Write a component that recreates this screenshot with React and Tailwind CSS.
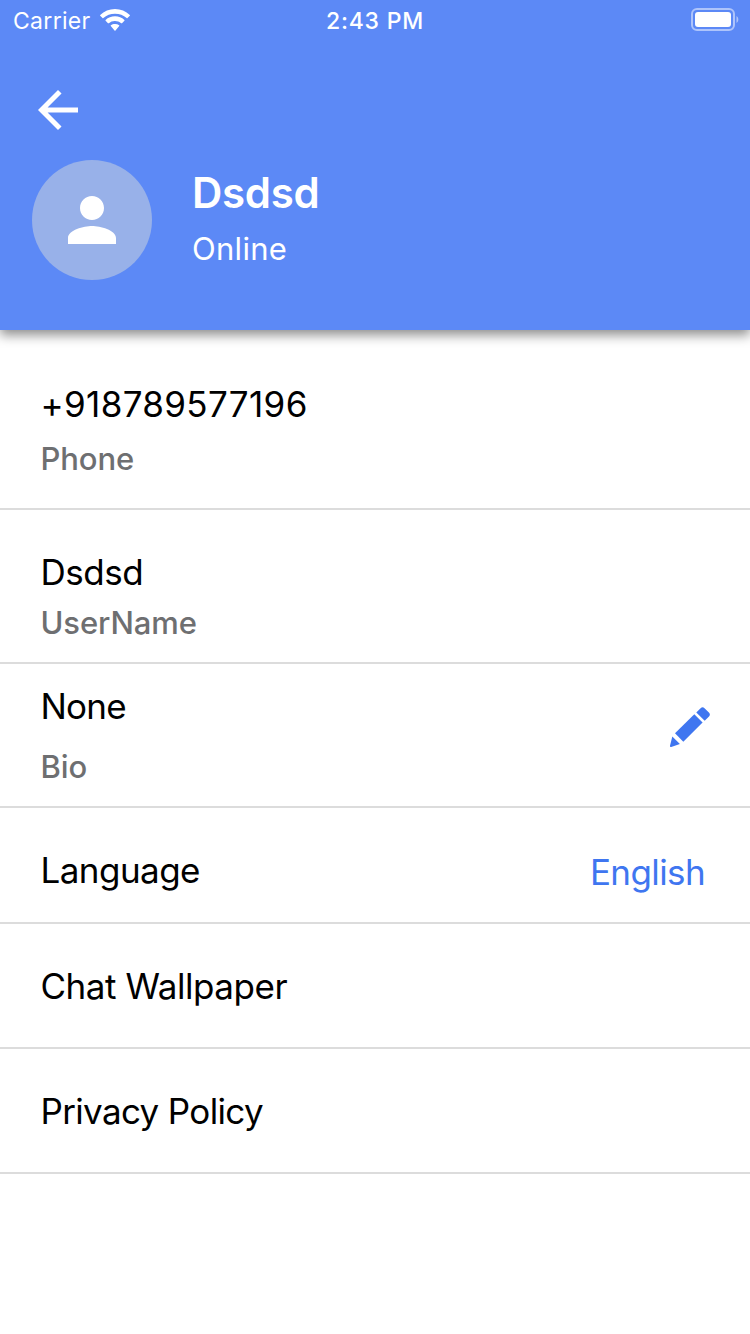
import React from "react";
import { MdArrowBack, MdPerson } from "react-icons/md";

const rows = [
  { value: "+918789577196", label: "Phone", row: "h-[180px] pt-[54px]", gap: "mt-[15px]", tracking: "tracking-[0.35px]" },
  { value: "Dsdsd", label: "UserName", row: "h-[154px] pt-[42px]", gap: "mt-[11px]", tracking: "tracking-[-0.5px]" },
  { value: "None", label: "Bio", row: "h-[144px] pt-[22px]", gap: "mt-[21px]", tracking: "tracking-[-0.8px]", editable: true },
  { value: "Language", row: "h-[116px] pt-[42px]", tracking: "tracking-[-0.55px]", action: "English" },
  { value: "Chat Wallpaper", row: "h-[125px] pt-[42px]", tracking: "tracking-[-0.45px]" },
  { value: "Privacy Policy", row: "h-[125px] pt-[42px]", tracking: "tracking-[-0.65px]" },
];

export default function App() {
  return (
    <div className="w-[750px] h-[1334px] bg-white overflow-hidden font-['Inter',sans-serif]">
      <Header />
      {rows.map((item) => (
        <SettingRow key={item.value} item={item} />
      ))}
    </div>
  );
}

function Header() {
  return (
    <div className="h-[330px] bg-[#5c89f6] text-white relative shadow-[0_5px_11px_rgba(0,0,0,0.45)]">
      <StatusBar />
      <div className="pt-10 pl-7">
        <MdArrowBack className="size-[60px]" />
      </div>
      <div className="flex pl-8 pt-5">
        <div className="size-[120px] rounded-full bg-[#98b1e9] flex items-center justify-center">
          <MdPerson className="size-[72px]" />
        </div>
        <div className="pl-10 pt-2">
          <div className="text-[42px] leading-[50px] font-semibold tracking-[-0.3px]">Dsdsd</div>
          <div className="mt-[11px] text-[31px] leading-10 tracking-[0.3px]">Online</div>
        </div>
      </div>
    </div>
  );
}

function StatusBar() {
  return (
    <div className="h-10 grid grid-cols-3 items-start px-[13px] text-[23px] leading-[42px]">
      <div className="flex items-start gap-[9px]">
        <span className="tracking-[0.3px]">Carrier</span>
        <WifiIcon />
      </div>
      <div className="text-center font-medium tracking-[0.8px]">2:43 PM</div>
      <div className="flex justify-end">
        <BatteryIcon />
      </div>
    </div>
  );
}

function SettingRow({ item }) {
  return (
    <div className={`${item.row} flex justify-between pl-[40.5px] pr-10 border-b-2 border-[#dcdcdc]`}>
      <div>
        <div className={`${item.tracking} text-[35px] leading-10 text-black`}>{item.value}</div>
        {item.label && (
          <div className={`${item.gap} text-[31px] leading-10 font-medium tracking-[-0.1px] text-[#6e6f71]`}>{item.label}</div>
        )}
      </div>
      {item.editable && <PencilIcon />}
      {item.action && (
        <div className="pt-[2px] pr-[5px] text-[35px] leading-10 tracking-[-0.6px] text-[#3f76f0]">{item.action}</div>
      )}
    </div>
  );
}

function WifiIcon() {
  return (
    <svg className="mt-[9px] w-[30px] h-[22px]" viewBox="0 0 30 22" fill="currentColor">
      <path d="M15 0C9.300 0 4.100 2.200.2 5.900c-.25.25-.25.600 0 .85l2.300 2.300c.25.25.600.25.850 0C6.500 6.200 10.500 4.700 15 4.700s8.500 1.500 11.650 4.350c.25.25.600.25.850 0l2.300-2.300c.25-.25.25-.600 0-.85C25.900 2.200 20.700 0 15 0z" />
      <path d="M15 7.300c-3.600 0-6.900 1.350-9.400 3.600-.25.25-.25.600 0 .85l2.400 2.400c.25.25.600.25.850 0A9 9 0 0 1 15 12.100c2.300 0 4.400.8 6.150 2.050.25.25.600.25.850 0l2.400-2.400c.25-.25.25-.600 0-.85A13.900 13.900 0 0 0 15 7.300z" />
      <path d="M15 14.900c-1.600 0-3 .5-4.150 1.350-.3.200-.3.600-.05.850l3.700 4.500c.3.300.7.300 1 0l3.700-4.500c.25-.25.25-.65-.05-.85A6.500 6.500 0 0 0 15 14.900z" />
    </svg>
  );
}

function BatteryIcon() {
  return (
    <svg className="mt-2 w-[48px] h-6 -mr-[2px]" viewBox="0 0 48 24" fill="none">
      <rect x="1" y="1" width="42" height="21" rx="5" stroke="#fff" strokeOpacity=".5" strokeWidth="2" />
      <rect x="4" y="4" width="36" height="15" rx="3" fill="#fff" />
      <path d="M45.500 8v7c1.300-.7 1.800-2 1.800-3.500s-.5-2.800-1.800-3.500z" fill="#fff" fillOpacity=".5" />
    </svg>
  );
}

function PencilIcon() {
  return (
    <svg className="mt-[21px] size-10" viewBox="0 0 40 40" fill="#3f76f0">
      <path d="M2.300 29.500 9.900 37 1.200 39.900Q-.3 40.300 0 38.700z" />
      <path d="M5 26.300 24.300 7.300 32.600 15.600 13.300 34.800z" />
      <path d="M26.300 5.600 30.600 1.300Q32.500-.6 34.500 1.200L38.900 5.600Q40.800 7.600 39 9.400L34.700 13.800z" />
    </svg>
  );
}
